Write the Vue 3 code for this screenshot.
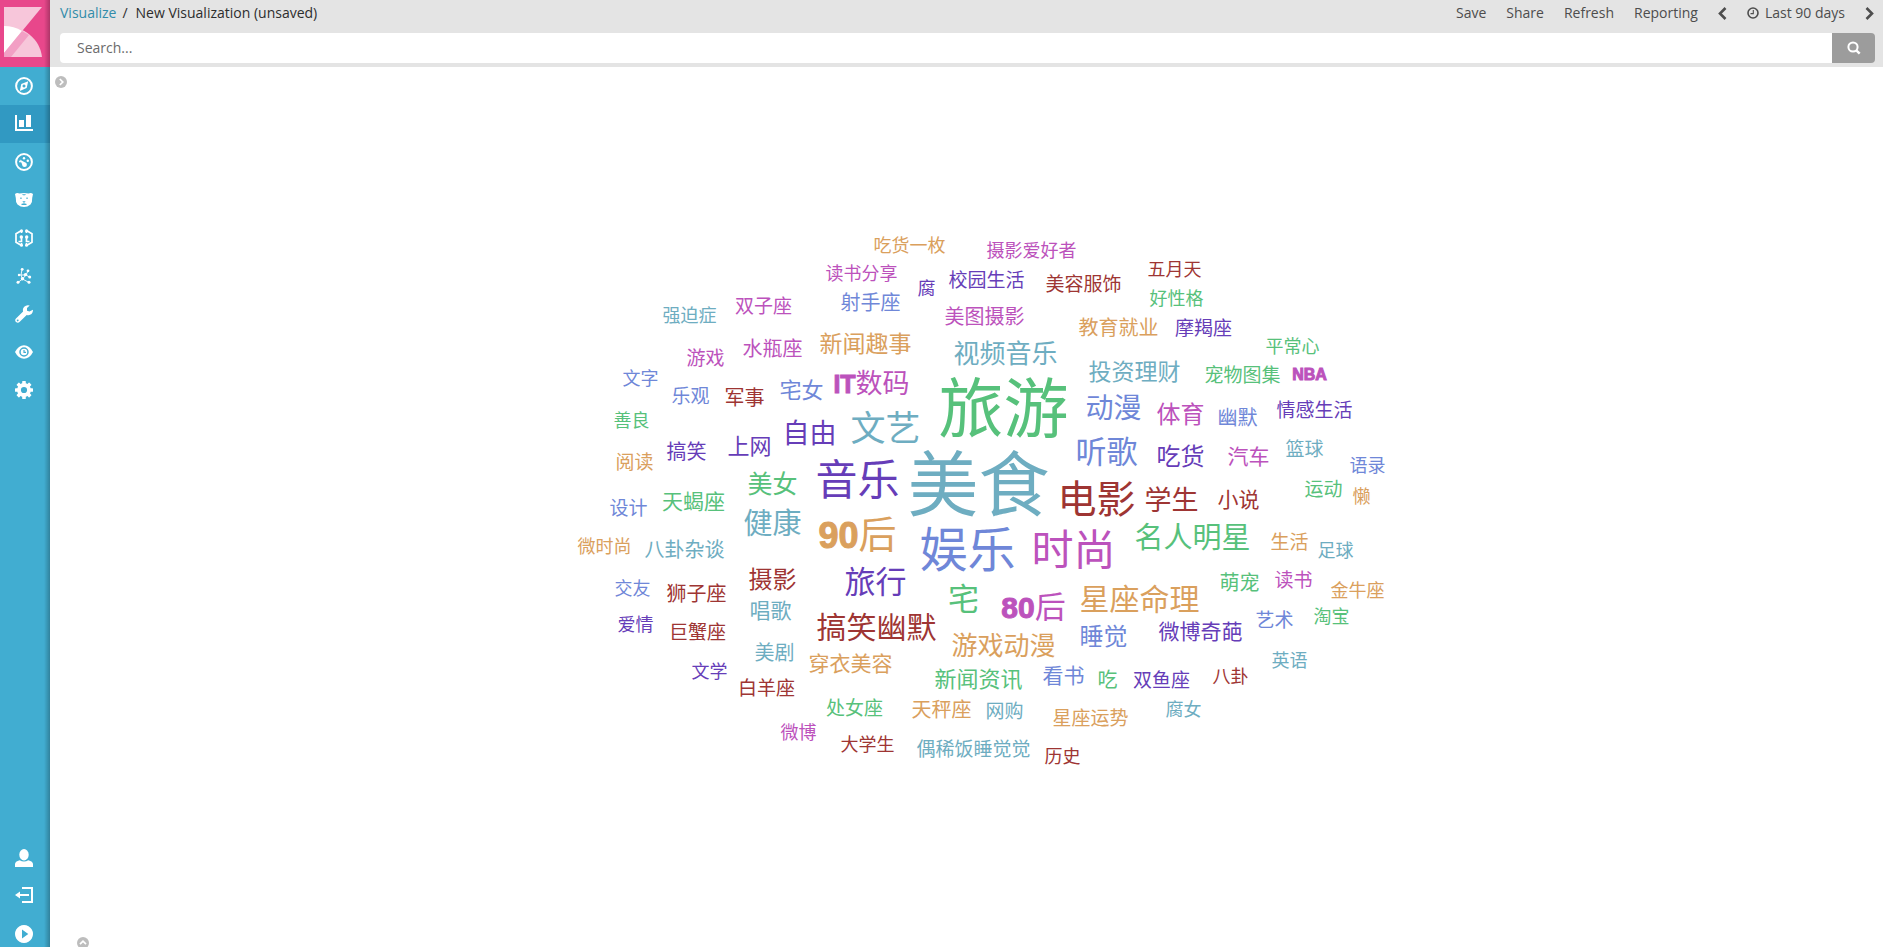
<script setup>
import { ref } from 'vue'

const query = ref('')

const palette = {
  teal: '#6eadc1',
  green: '#57c17b',
  blue: '#6f87d8',
  purple: '#663db8',
  pink: '#bc52bc',
  red: '#9e3533',
  orange: '#daa05d',
}

// The layout's own origin; words are placed around it and the cloud is
// centred in the panel.
const origin = { x: 967, y: 507 }

// text, centre x, centre y, font size, colour
const words = [
  ['美食', 979, 484, 71, 'teal'],
  ['旅游', 1004, 408, 65, 'green'],
  ['娱乐', 968, 549, 48, 'blue'],
  ['音乐', 858, 480, 42, 'purple'],
  ['时尚', 1074, 550, 42, 'pink'],
  ['电影', 1097, 499, 39, 'red'],
  ['文艺', 886, 428, 35, 'teal'],
  ['听歌', 1107, 452, 31, 'blue'],
  ['旅行', 876, 582, 31, 'purple'],
  ['宅', 964, 599, 31, 'green'],
  ['星座命理', 1140, 599, 30, 'orange'],
  ['搞笑幽默', 877, 627, 30, 'red'],
  ['名人明星', 1193, 537, 29, 'green'],
  ['健康', 773, 523, 29, 'teal'],
  ['动漫', 1114, 408, 28, 'blue'],
  ['自由', 810, 433, 27, 'purple'],
  ['学生', 1172, 500, 27, 'red'],
  ['视频音乐', 1006, 354, 26, 'teal'],
  ['游戏动漫', 1004, 646, 26, 'orange'],
  ['美女', 773, 484, 25, 'green'],
  ['体育', 1181, 414, 24, 'pink'],
  ['吃货', 1181, 456, 24, 'purple'],
  ['摄影', 773, 579, 24, 'red'],
  ['睡觉', 1104, 636, 24, 'blue'],
  ['新闻趣事', 866, 344, 23, 'orange'],
  ['投资理财', 1135, 372, 23, 'teal'],
  ['新闻资讯', 979, 679, 22, 'green'],
  ['上网', 750, 446, 22, 'purple'],
  ['宅女', 802, 390, 22, 'blue'],
  ['汽车', 1249, 457, 21, 'pink'],
  ['小说', 1239, 500, 21, 'red'],
  ['微博奇葩', 1201, 632, 21, 'purple'],
  ['看书', 1064, 676, 21, 'blue'],
  ['穿衣美容', 851, 664, 21, 'orange'],
  ['天蝎座', 694, 502, 21, 'green'],
  ['唱歌', 771, 611, 21, 'teal'],
  ['水瓶座', 773, 349, 20, 'pink'],
  ['军事', 745, 398, 20, 'red'],
  ['搞笑', 687, 452, 20, 'purple'],
  ['射手座', 871, 303, 20, 'blue'],
  ['美图摄影', 985, 317, 20, 'pink'],
  ['教育就业', 1119, 328, 20, 'orange'],
  ['幽默', 1238, 418, 20, 'blue'],
  ['萌宠', 1240, 583, 20, 'green'],
  ['吃', 1108, 680, 20, 'green'],
  ['天秤座', 942, 710, 20, 'orange'],
  ['八卦杂谈', 685, 550, 20, 'teal'],
  ['狮子座', 697, 594, 20, 'red'],
  ['美剧', 775, 653, 20, 'teal'],
  ['双子座', 764, 306, 19, 'pink'],
  ['游戏', 706, 358, 19, 'pink'],
  ['乐观', 691, 396, 19, 'blue'],
  ['阅读', 635, 462, 19, 'orange'],
  ['校园生活', 987, 280, 19, 'purple'],
  ['美容服饰', 1084, 284, 19, 'red'],
  ['摩羯座', 1204, 328, 19, 'purple'],
  ['宠物图集', 1243, 375, 19, 'green'],
  ['情感生活', 1315, 410, 19, 'purple'],
  ['篮球', 1305, 449, 19, 'teal'],
  ['运动', 1324, 489, 19, 'green'],
  ['生活', 1290, 542, 19, 'orange'],
  ['读书', 1294, 580, 19, 'pink'],
  ['艺术', 1275, 620, 19, 'blue'],
  ['双鱼座', 1162, 680, 19, 'purple'],
  ['星座运势', 1091, 718, 19, 'orange'],
  ['处女座', 855, 708, 19, 'green'],
  ['网购', 1005, 711, 19, 'teal'],
  ['偶稀饭睡觉觉', 974, 749, 19, 'teal'],
  ['设计', 629, 508, 19, 'blue'],
  ['巨蟹座', 698, 632, 19, 'red'],
  ['白羊座', 767, 688, 19, 'red'],
  ['强迫症', 690, 316, 18, 'teal'],
  ['文字', 641, 379, 18, 'blue'],
  ['善良', 632, 421, 18, 'green'],
  ['吃货一枚', 910, 246, 18, 'orange'],
  ['摄影爱好者', 1032, 251, 18, 'pink'],
  ['读书分享', 862, 274, 18, 'pink'],
  ['腐', 927, 289, 18, 'purple'],
  ['五月天', 1175, 270, 18, 'red'],
  ['好性格', 1177, 299, 18, 'green'],
  ['平常心', 1293, 347, 18, 'green'],
  ['语录', 1368, 466, 18, 'blue'],
  ['懒', 1362, 497, 18, 'orange'],
  ['足球', 1336, 551, 18, 'teal'],
  ['金牛座', 1358, 591, 18, 'orange'],
  ['淘宝', 1332, 617, 18, 'green'],
  ['英语', 1290, 661, 18, 'teal'],
  ['八卦', 1231, 677, 18, 'red'],
  ['腐女', 1184, 710, 18, 'teal'],
  ['大学生', 868, 745, 18, 'red'],
  ['历史', 1063, 757, 18, 'red'],
  ['微时尚', 605, 547, 18, 'orange'],
  ['交友', 633, 589, 18, 'blue'],
  ['爱情', 636, 625, 18, 'purple'],
  ['文学', 710, 672, 18, 'purple'],
  ['微博', 799, 733, 18, 'pink'],
].map(([text, x, y, size, color]) => ({
  text,
  x: x - origin.x,
  y: Math.floor(y - origin.y + size * 0.38),
  size,
  fill: palette[color],
}))

// Words that open with heavy Latin letters or digits
const mixedWords = [
  { latin: '90', han: '后', x: 858, y: 548, size: 38, latinSize: 36, color: 'orange' },
  { latin: '80', han: '后', x: 1034, y: 618, size: 31, latinSize: 30, color: 'pink' },
  { latin: 'IT', han: '数码', x: 872, y: 393, size: 27, latinSize: 25, color: 'pink' },
  { latin: 'NBA', han: '', x: 1310, y: 380, size: 16, latinSize: 16, color: 'pink' },
].map((w) => ({ ...w, x: w.x - origin.x, y: w.y - origin.y, fill: palette[w.color] }))

const gearTeeth = [0, 45, 90, 135, 180, 225, 270, 315]
</script>

<template>
  <div class="app">
    <nav class="sidebar" aria-label="Applications">
      <a class="logo" href="#" aria-label="Kibana">
        <svg width="50" height="67" viewBox="0 0 50 67">
          <path d="M4 7H42L4 53Z" fill="#f7c6da" />
          <path d="M4 26C24 26 40 39 42 57H4Z" fill="#f7c6da" />
          <path d="M4 26Q14 26 22 31L4 53Z" fill="#fff" />
          <path d="M22 31L29 35L11 57H4V53Z" fill="#f29fc4" />
        </svg>
      </a>
      <a class="item" href="#" aria-label="Discover">
        <svg viewBox="0 0 18 18">
          <circle cx="9" cy="9" r="7.9" fill="none" stroke="#fff" stroke-width="2" />
          <path fill="#fff" fill-rule="evenodd" d="M13.200 4.200L11.700 11L4.800 14L6.300 7ZM9 7.600a1.500 1.500 0 1 0 .01 0Z" />
        </svg>
      </a>
      <a class="item active" href="#" aria-label="Visualize" aria-current="page">
        <svg viewBox="0 0 18 18">
          <path fill="#fff" d="M0 0H2V14H18V16H0ZM4 5H9V12H4ZM11 0H16V12H11Z" />
        </svg>
      </a>
      <a class="item" href="#" aria-label="Dashboard">
        <svg viewBox="0 0 18 18">
          <circle cx="9" cy="9" r="7.9" fill="none" stroke="#fff" stroke-width="2" />
          <g fill="#fff">
            <circle cx="9.600" cy="11.700" r="2.300" />
            <path d="M4.800 6.600L11.400 10.300L8 13Z" />
            <circle cx="5" cy="8.600" r="1" />
            <circle cx="9" cy="5.200" r="1.200" />
            <circle cx="12.800" cy="7.800" r="1.200" />
          </g>
        </svg>
      </a>
      <a class="item" href="#" aria-label="Timelion">
        <svg viewBox="0 0 18 18">
          <path fill="#fff" d="M0 3Q2 1.400 4.500 2.600Q9 1.600 13.500 2.600Q16 1.400 18 3L17.200 7Q17.500 11 15.500 13.500Q12.500 16 9 16Q5.500 16 2.500 13.500Q.5 11 .8 7Z" />
          <g fill="#41add1">
            <rect x="5.200" y="6.600" width="1.500" height="1.200" />
            <rect x="11.300" y="6.600" width="1.500" height="1.200" />
            <path d="M7 3.200H11L10 4.200H8ZM7.300 10.300H10.700L9 12ZM6 13L9 12.200L12 13L11 14H7Z" />
          </g>
        </svg>
      </a>
      <a class="item" href="#" aria-label="Machine Learning">
        <svg viewBox="0 0 18 18">
          <g fill="none" stroke="#fff" stroke-width="1.700">
            <path d="M6.500 1.500L1 4.800V13.200L6.500 16.500M11.500 1.500L17 4.800V13.200L11.500 16.500" />
            <path d="M6.500 8V12.500H3.500M11.500 8V12.500H14.500M6.500 2V4M11.500 2V4M6.500 14V16M11.500 14V16" />
          </g>
          <g fill="#fff">
            <circle cx="6.500" cy="1.800" r="1.500" />
            <circle cx="11.500" cy="1.800" r="1.500" />
            <circle cx="6.500" cy="16.200" r="1.500" />
            <circle cx="11.500" cy="16.200" r="1.500" />
            <circle cx="6.300" cy="8" r="1.700" />
            <circle cx="11.700" cy="8" r="1.700" />
          </g>
        </svg>
      </a>
      <a class="item" href="#" aria-label="Graph">
        <svg viewBox="0 0 18 18">
          <path fill="none" stroke="#fff" stroke-width=".9" d="M7 2.500L6 8L7.500 12L3 15.500M4 8H11L13 4M7.500 12L11 8L14.500 10M7.500 12L14 15.500" />
          <g fill="#fff">
            <circle cx="7.200" cy="2.300" r="1.400" />
            <circle cx="13" cy="3.800" r="1.400" />
            <circle cx="4" cy="8" r="1.200" />
            <circle cx="10.500" cy="7.600" r="1.700" />
            <circle cx="14.700" cy="10" r="1.500" />
            <circle cx="7.500" cy="11.800" r="1.700" />
            <circle cx="3" cy="15.200" r="1.500" />
            <circle cx="14" cy="15.200" r="1.500" />
          </g>
        </svg>
      </a>
      <a class="item" href="#" aria-label="Dev Tools">
        <svg viewBox="0 0 18 18">
          <path fill="#fff" fill-rule="evenodd" d="M14.700 .5L12 3.100V5.700L14.500 6.500L17.900 4.700Q18.300 7.300 16.500 9Q14.500 10.700 11.700 9.900L4.500 17Q3 18.500 1 17Q-.6 15.100 1 13.500L8.100 6.400Q7.300 3.700 9.200 1.700Q11.500-.5 14.700 .5ZM2.700 14.400a.9 .9 0 1 0 .01 0Z" />
        </svg>
      </a>
      <a class="item" href="#" aria-label="Monitoring">
        <svg viewBox="0 0 18 18">
          <path fill="#fff" d="M0 9Q3.500 2.200 9 2.200T18 9Q14.500 15.800 9 15.800T0 9Z" />
          <circle cx="9" cy="9" r="4" fill="none" stroke="#41add1" stroke-width="1.500" />
          <path d="M9 7V9.300H11" fill="none" stroke="#41add1" stroke-width="1.200" />
        </svg>
      </a>
      <a class="item" href="#" aria-label="Management">
        <svg viewBox="0 0 18 18">
          <circle cx="9" cy="9" r="5" fill="none" stroke="#fff" stroke-width="3.800" />
          <rect
            v-for="angle in gearTeeth"
            :key="angle"
            x="7.200"
            y="0"
            width="3.600"
            height="4"
            rx=".6"
            fill="#fff"
            :transform="`rotate(${angle} 9 9)`"
          />
        </svg>
      </a>
      <div class="bottom">
        <a class="item" href="#" aria-label="Account">
          <svg viewBox="0 0 18 18">
            <ellipse cx="9" cy="5.700" rx="4.700" ry="5.700" fill="#fff" />
            <path fill="#fff" d="M0 18V15Q0 12.500 4.700 11.200Q9 14 13.300 11.200Q18 12.500 18 15V18Z" />
          </svg>
        </a>
        <a class="item" href="#" aria-label="Logout">
          <svg viewBox="0 0 18 18">
            <path d="M7 1H17V15H7" fill="none" stroke="#fff" stroke-width="2" />
            <path d="M3 8H14" stroke="#fff" stroke-width="2" />
            <path d="M0 8L5 4.500V11.500Z" fill="#fff" />
          </svg>
        </a>
        <a class="item" href="#" aria-label="Expand menu">
          <svg viewBox="0 0 18 18">
            <path fill="#fff" fill-rule="evenodd" d="M9 0a9 9 0 1 0 .01 0ZM7 4.500L13.300 9L7 13.500Z" />
          </svg>
        </a>
      </div>
    </nav>

    <div class="content">
      <header class="topbar">
        <div class="row">
          <div class="crumbs">
            <a href="#">Visualize</a>
            <span class="slash">/</span>
            <span>New Visualization (unsaved)</span>
          </div>
          <div class="menu">
            <button type="button">Save</button>
            <button type="button">Share</button>
            <button type="button">Refresh</button>
            <button type="button">Reporting</button>
            <button type="button" aria-label="Previous period">
              <svg width="9" height="13" viewBox="0 0 9 13">
                <path d="M7.500 1L2 6.500L7.500 12" fill="none" stroke="#4d4d4d" stroke-width="2.600" />
              </svg>
            </button>
            <button type="button" class="period">
              <svg width="12" height="12" viewBox="0 0 12 12">
                <circle cx="6" cy="6" r="5" fill="none" stroke="#4d4d4d" stroke-width="1.600" />
                <path d="M6.300 3V6.600H3.500" fill="none" stroke="#4d4d4d" stroke-width="1.100" />
              </svg>
              Last 90 days
            </button>
            <button type="button" aria-label="Next period">
              <svg width="9" height="13" viewBox="0 0 9 13">
                <path d="M1.500 1L7 6.500L1.500 12" fill="none" stroke="#4d4d4d" stroke-width="2.600" />
              </svg>
            </button>
          </div>
        </div>
        <form class="search" @submit.prevent>
          <input v-model="query" type="text" placeholder="Search..." aria-label="Search" />
          <button type="submit" aria-label="Run search">
            <svg width="14" height="14" viewBox="0 0 14 14">
              <circle cx="6" cy="6" r="4.600" fill="none" stroke="#fff" stroke-width="2" />
              <path d="M9.300 9.300L12.700 12.700" stroke="#fff" stroke-width="2.400" />
            </svg>
          </button>
        </form>
      </header>

      <main class="panel">
        <svg class="cloud" role="img" aria-label="Tag cloud">
          <svg x="50%" y="50%" overflow="visible">
            <text
              v-for="word in words"
              :key="word.text"
              :x="word.x"
              :y="word.y"
              :font-size="word.size"
              :fill="word.fill"
            >{{ word.text }}</text>
            <text
              v-for="word in mixedWords"
              :key="word.latin"
              :x="word.x"
              :y="word.y"
              :font-size="word.size"
              :fill="word.fill"
            ><tspan class="latin" :font-size="word.latinSize" :stroke="word.fill">{{ word.latin }}</tspan>{{ word.han }}</text>
          </svg>
        </svg>
        <button type="button" class="toggle toggle-editor" aria-label="Show editor">
          <svg width="12" height="12" viewBox="0 0 12 12">
            <circle cx="6" cy="6" r="6" fill="#bdbdbd" />
            <path d="M4.800 3L7.800 6L4.800 9" fill="none" stroke="#fff" stroke-width="1.700" />
          </svg>
        </button>
        <button type="button" class="toggle toggle-spy" aria-label="Show details">
          <svg width="12" height="12" viewBox="0 0 12 12">
            <circle cx="6" cy="6" r="6" fill="#bdbdbd" />
            <path d="M3 7.200L6 4.200L9 7.200" fill="none" stroke="#fff" stroke-width="1.700" />
          </svg>
        </button>
      </main>
    </div>
  </div>
</template>

<style>
body {
  margin: 0;
}
</style>

<style scoped>
.app {
  display: flex;
  height: 100vh;
  overflow: hidden;
  background: #fff;
  font-family: "Open Sans", "Noto Sans CJK SC", sans-serif;
  font-size: 14px;
  line-height: 20px;
  color: #2d2d2d;
}
button {
  padding: 0;
  border: 0;
  background: none;
  font: inherit;
  color: inherit;
  cursor: pointer;
}
svg {
  display: block;
}
.sidebar {
  position: relative;
  display: flex;
  flex: 0 0 50px;
  flex-direction: column;
  background: #41add1;
}
.sidebar::after {
  content: "";
  position: absolute;
  inset: 0 0 0 auto;
  width: 6px;
  background: linear-gradient(to right, rgba(0, 0, 0, 0), rgba(0, 0, 0, 0.25));
  pointer-events: none;
}
.logo {
  background: #e8478b;
}
.item {
  display: flex;
  align-items: center;
  height: 38px;
  padding-left: 15px;
}
.item svg {
  width: 18px;
  height: 18px;
}
.item.active {
  background: #3199c2;
}
.bottom {
  margin-top: auto;
  margin-bottom: -6px;
}
.content {
  display: flex;
  flex: 1;
  flex-direction: column;
  min-width: 0;
}
.topbar {
  padding: 3px 8px 4px 10px;
  background: #e4e4e4;
}
.row {
  display: flex;
  justify-content: space-between;
  height: 30px;
}
.crumbs {
  display: flex;
}
.crumbs a {
  color: #328caa;
  text-decoration: none;
}
.slash {
  margin: 0 8px 0 6px;
}
.menu {
  display: flex;
  align-items: center;
  gap: 20px;
  height: 20px;
  margin-right: 1px;
  color: #4d4d4d;
}
.period {
  display: flex;
  align-items: center;
  gap: 6px;
}
.search {
  display: flex;
  height: 30px;
}
.search input {
  flex: 1;
  min-width: 0;
  padding: 0 17px;
  border: 0;
  border-radius: 4px 0 0 4px;
  background: #fff;
  font: inherit;
  color: #2d2d2d;
  outline: none;
}
.search input::placeholder {
  color: #6b6b6b;
}
.search button {
  display: flex;
  align-items: center;
  justify-content: center;
  width: 43px;
  border-radius: 0 4px 4px 0;
  background: #9c9c9c;
}
.panel {
  position: relative;
  flex: 1;
  min-height: 0;
}
.cloud {
  width: 100%;
  height: 100%;
}
.cloud text {
  font-family: "Liberation Sans", "Noto Sans CJK SC", sans-serif;
  text-anchor: middle;
}
.cloud .latin {
  font-weight: 700;
  stroke-width: 1px;
}
.toggle {
  position: absolute;
}
.toggle-editor {
  top: 9px;
  left: 5px;
}
.toggle-spy {
  bottom: -2px;
  left: 27px;
}
</style>
